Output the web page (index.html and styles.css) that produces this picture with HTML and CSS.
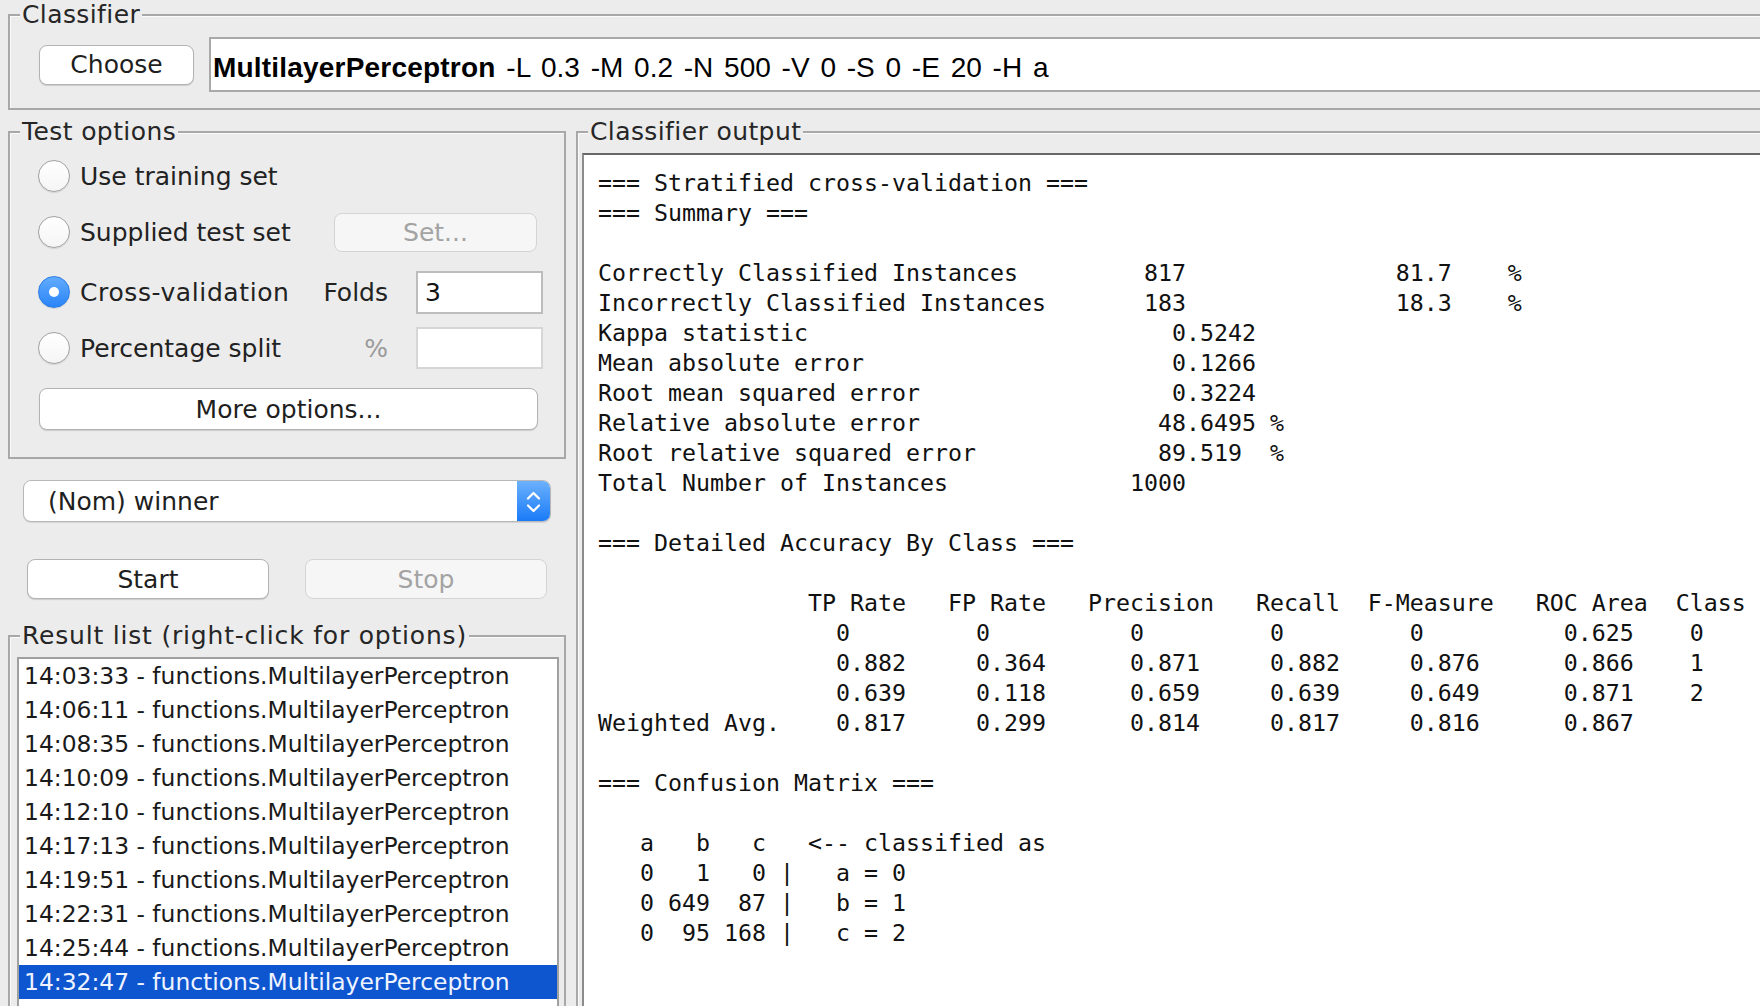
FILE: index.html
```html
<!DOCTYPE html>
<html lang="en">
<head>
<meta charset="utf-8">
<title>Weka Explorer - Classify</title>
<link rel="stylesheet" href="styles.css">
</head>
<body>
<div class="window">
  <fieldset class="group classifier">
    <legend>Classifier</legend>
    <div class="classifier-row">
      <button class="btn choose">Choose</button>
      <div class="cmd"><b>MultilayerPerceptron</b> -L 0.3 -M 0.2 -N 500 -V 0 -S 0 -E 20 -H a</div>
    </div>
  </fieldset>

  <div class="main">
    <div class="left">
      <fieldset class="group test-options">
        <legend>Test options</legend>
        <div class="opts">
          <div class="opt r1"><span class="radio"></span><span class="opt-name">Use training set</span></div>
          <div class="opt r2"><span class="radio"></span><span class="opt-name">Supplied test set</span><button class="btn set" disabled>Set...</button></div>
          <div class="opt r3"><span class="radio on"><span class="dot"></span></span><span class="opt-name wide">Cross-validation</span><span class="opt-label">Folds</span><span class="field">3</span></div>
          <div class="opt r4"><span class="radio"></span><span class="opt-name">Percentage split</span><span class="opt-label dim">%</span><span class="field off"></span></div>
          <button class="btn more">More options...</button>
        </div>
      </fieldset>

      <div class="combo">
        <span class="combo-text">(Nom) winner</span>
        <span class="combo-arrow"><svg width="33" height="42" viewBox="0 0 33 42"><path d="M11 17.5 L16.5 12 L22 17.5 M11 24.5 L16.5 30 L22 24.5" fill="none" stroke="#fff" stroke-width="2.2" stroke-linecap="round" stroke-linejoin="round"/></svg></span>
      </div>

      <div class="actions">
        <button class="btn start">Start</button>
        <button class="btn stop" disabled>Stop</button>
      </div>

      <fieldset class="group results">
        <legend>Result list (right-click for options)</legend>
        <ul class="list">
          <li>14:03:33 - functions.MultilayerPerceptron</li>
          <li>14:06:11 - functions.MultilayerPerceptron</li>
          <li>14:08:35 - functions.MultilayerPerceptron</li>
          <li>14:10:09 - functions.MultilayerPerceptron</li>
          <li>14:12:10 - functions.MultilayerPerceptron</li>
          <li>14:17:13 - functions.MultilayerPerceptron</li>
          <li>14:19:51 - functions.MultilayerPerceptron</li>
          <li>14:22:31 - functions.MultilayerPerceptron</li>
          <li>14:25:44 - functions.MultilayerPerceptron</li>
          <li class="sel">14:32:47 - functions.MultilayerPerceptron</li>
        </ul>
      </fieldset>
    </div>

    <fieldset class="group output">
      <legend>Classifier output</legend>
<pre class="log">=== Stratified cross-validation ===
=== Summary ===

Correctly Classified Instances         817               81.7    %
Incorrectly Classified Instances       183               18.3    %
Kappa statistic                          0.5242
Mean absolute error                      0.1266
Root mean squared error                  0.3224
Relative absolute error                 48.6495 %
Root relative squared error             89.519  %
Total Number of Instances             1000     

=== Detailed Accuracy By Class ===

               TP Rate   FP Rate   Precision   Recall  F-Measure   ROC Area  Class
                 0         0          0         0         0          0.625    0
                 0.882     0.364      0.871     0.882     0.876      0.866    1
                 0.639     0.118      0.659     0.639     0.649      0.871    2
Weighted Avg.    0.817     0.299      0.814     0.817     0.816      0.867

=== Confusion Matrix ===

   a   b   c   &lt;-- classified as
   0   1   0 |   a = 0
   0 649  87 |   b = 1
   0  95 168 |   c = 2
</pre>
    </fieldset>
  </div>
</div>
</body>
</html>
```

FILE: styles.css
```css
* { box-sizing: border-box; }

html, body {
  margin: 0;
  padding: 0;
}

body {
  background: #ececec;
  overflow: hidden;
  font-family: "DejaVu Sans", "Noto Sans", sans-serif;
  font-size: 25px;
  color: #222;
}

.window {
  width: 1820px;
  height: 1060px;
  display: flex;
  flex-direction: column;
}

/* etched group boxes */
.group {
  margin: 0;
  min-width: 0;
  border: 2px solid #a8a8a8;
  box-shadow: inset 1px 1px 0 #fbfbfb;
}

.group > legend {
  padding: 0 2px;
  line-height: 30px;
  font-size: 25px;
  letter-spacing: 0.4px;
  color: #262626;
  background: #ececec;
}

/* classifier */
.classifier {
  flex: none;
  margin-left: 8px;
  padding: 7px 0 16px 10px;
}

.classifier-row {
  display: flex;
  align-items: center;
  gap: 15px;
  height: 55px;
  padding-left: 19px;
}

.btn {
  font-family: "DejaVu Sans", "Noto Sans", sans-serif;
  font-size: 25px;
  line-height: 1;
  color: #1f1f1f;
  background: #fff;
  border: 1px solid #b3b3b3;
  border-radius: 8px;
  box-shadow: 0 1px 1px rgba(0, 0, 0, 0.14);
  padding: 0;
}

.btn[disabled] {
  background: #f6f6f6;
  color: #a3a3a3;
  border-color: #d4d4d4;
  box-shadow: none;
}

.choose {
  width: 155px;
  height: 40px;
  flex: none;
}

.cmd {
  flex: 1;
  height: 55px;
  display: flex;
  align-items: center;
  padding: 6px 0 0 2px;
  background: #fff;
  border: 2px solid #a9a9a9;
  border-right: 0;
  font-family: "Liberation Sans", Arial, sans-serif;
  font-size: 28px;
  color: #000;
  white-space: pre;
  word-spacing: 3px;
}

.cmd b {
  font-weight: bold;
  letter-spacing: 0.2px;
  word-spacing: 0;
}

/* main area */
.main {
  flex: 1;
  display: flex;
  margin-top: 7px;
  min-height: 0;
}

.left {
  width: 558px;
  margin-left: 8px;
  display: flex;
  flex-direction: column;
  flex: none;
}

.left > * {
  flex: none;
}

/* test options */
.test-options {
  padding: 0 21px 27px 10px;
}

.opts {
  padding-left: 18px;
}

.opt {
  display: flex;
  align-items: center;
}

.r1 { height: 58px; }
.r2 { height: 54px; }
.r3 { height: 66px; }
.r4 { height: 46px; }

.radio {
  width: 32px;
  height: 32px;
  flex: none;
  border-radius: 50%;
  border: 1px solid #a2a2a2;
  background: linear-gradient(#ffffff, #f5f5f5);
  box-shadow: 0 1px 1px rgba(0, 0, 0, 0.1);
  display: flex;
  align-items: center;
  justify-content: center;
}

.radio.on {
  background: linear-gradient(#62acfd, #2a84f8);
  border-color: #2b7de6;
}

.dot {
  width: 10px;
  height: 10px;
  border-radius: 50%;
  background: #fff;
}

.opt-name {
  flex: 1;
  margin-left: 10px;
  white-space: nowrap;
}

.opt-name.wide {
  letter-spacing: 0.6px;
}

.opt-label {
  margin-right: 28px;
}

.opt-label.dim {
  color: #9a9a9a;
}

.set {
  width: 203px;
  height: 39px;
  margin-right: 6px;
}

.field {
  width: 127px;
  height: 43px;
  flex: none;
  background: #fff;
  border: 2px solid #bdbdbd;
  padding-left: 7px;
  line-height: 39px;
  color: #111;
}

.field.off {
  height: 42px;
  border-color: #d6d6d6;
}

.more {
  display: block;
  width: 499px;
  height: 42px;
  margin: 17px 0 0 1px;
}

/* class combo */
.combo {
  display: flex;
  height: 42px;
  margin: 21px 15px 0 15px;
  background: #fff;
  border: 1px solid #b8b8b8;
  border-radius: 8px;
  overflow: hidden;
  box-shadow: 0 1px 1px rgba(0, 0, 0, 0.1);
}

.combo-text {
  flex: 1;
  display: flex;
  align-items: center;
  padding-left: 24px;
  color: #1f1f1f;
}

.combo-arrow {
  width: 33px;
  flex: none;
  display: flex;
  background: linear-gradient(#6cb1fd, #1a7bf8);
}

/* start / stop */
.actions {
  display: flex;
  gap: 36px;
  margin: 37px 0 0 19px;
}

.start,
.stop {
  width: 242px;
  height: 40px;
}

/* result list */
.results {
  margin-top: 22px;
  padding: 6px 5px 0 7px;
}

.results > legend {
  margin-left: 3px;
  letter-spacing: 0.8px;
}

.list {
  margin: 0;
  padding: 0;
  list-style: none;
  height: 420px;
  background: #fff;
  border: 2px solid #a0a0a0;
  font-size: 23.4px;
}

.list li {
  height: 34px;
  line-height: 34px;
  padding-left: 5px;
  white-space: nowrap;
  color: #1a1a1a;
}

.list li.sel {
  background: #0e56cf;
  color: #eef3ff;
}

/* output */
.output {
  flex: 1;
  margin-left: 10px;
  padding: 6px 0 0 4px;
  border-right: 0;
  border-bottom: 0;
}

.output > legend {
  margin-left: 6px;
}

.log {
  margin: 0;
  height: 940px;
  background: #fff;
  border-top: 2px solid #676767;
  border-left: 2px solid #8c8c8c;
  padding: 13px 0 0 14px;
  font-family: "DejaVu Sans Mono", "Liberation Mono", monospace;
  font-size: 23.25px;
  line-height: 30px;
  color: #111;
  white-space: pre;
  overflow: hidden;
}
```
